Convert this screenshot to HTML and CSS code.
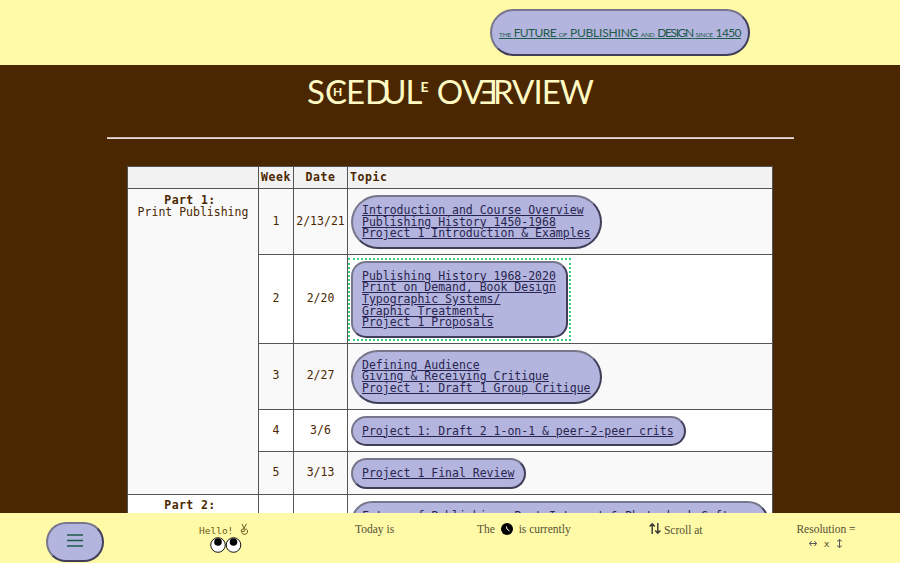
FILE: index.html
```html
<!DOCTYPE html>
<html lang="en">
<head>
    <meta charset="UTF-8">
    <meta name="viewport" content="width=device-width, initial-scale=1.0">
    <title>Schedule Overview</title>
    <link rel="stylesheet" href="styles.css">
</head>
<body>

    <header class="topBar">
        <a class="logoPill" href="#"><span class="logoText"><span class="logoSmall">THE</span> <span class="logoTight">FUTURE</span> <span class="logoSmall">OF</span> PUBLISHING <span class="logoSmall">AND</span> <span class="logoTighter">DESIGN</span> <span class="logoSmall">SINCE</span> <span class="logoYear">1450</span></span></a>
    </header>

    <main class="content">
        <h1 class="pageTitle">S<span class="ligature ligC">C<span class="ligInner">H</span></span>E<span class="joinD">D</span><span class="joinU">U</span><span class="ligature ligL">L<span class="ligUpper">E</span></span> OV<span class="flipE">E</span><span class="joinR">R</span>VIEW</h1>
        <hr class="titleRule">

        <table class="schedule">
            <tr class="headRow">
                <th class="colPart"></th>
                <th class="colWeek">Week</th>
                <th class="colDate">Date</th>
                <th class="colTopic">Topic</th>
            </tr>
            <tr class="rowA">
                <td class="partCell" rowspan="5"><b>Part 1:</b><br>Print Publishing</td>
                <td>1</td>
                <td>2/13/21</td>
                <td class="topicCell"><a class="pill" href="#">Introduction and Course Overview<br>Publishing History 1450-1968<br>Project 1 Introduction &amp; Examples</a></td>
            </tr>
            <tr class="rowB">
                <td>2</td>
                <td>2/20</td>
                <td class="topicCell"><span class="focusRing"><a class="pill pillSquare" href="#">Publishing History 1968-2020<br>Print on Demand, Book Design<br>Typographic Systems/<br>Graphic Treatment,&nbsp;<br>Project 1 Proposals</a></span></td>
            </tr>
            <tr class="rowA">
                <td>3</td>
                <td>2/27</td>
                <td class="topicCell"><a class="pill" href="#">Defining Audience<br>Giving &amp; Receiving Critique<br>Project 1: Draft 1 Group Critique</a></td>
            </tr>
            <tr class="rowB">
                <td>4</td>
                <td>3/6</td>
                <td class="topicCell"><a class="pill" href="#">Project 1: Draft 2 1-on-1 &amp; peer-2-peer crits</a></td>
            </tr>
            <tr class="rowA">
                <td>5</td>
                <td>3/13</td>
                <td class="topicCell"><a class="pill" href="#">Project 1 Final Review</a></td>
            </tr>
            <tr class="rowB">
                <td class="partCell"><b>Part 2:</b></td>
                <td>6</td>
                <td>3/20</td>
                <td class="topicCell"><a class="pill" href="#">Future of Publishing: Post-Internet &amp; Photo-book Software<br>Project 2 Introduction &amp; Examples</a></td>
            </tr>
        </table>
    </main>

    <footer class="bottomBar">
        <button class="menuBtn" aria-label="Menu">
            <svg width="16" height="13" viewBox="0 0 16 13">
                <path d="M0 1H16M0 6.5H16M0 12H16" stroke="#1f5a4a" stroke-width="1.6" fill="none"/>
            </svg>
        </button>
        <div class="hello">
            <div class="helloText">Hello!
                <svg class="helloHand" width="9" height="12" viewBox="0 0 9 12">
                    <path d="M2 1L4.5 6M6.5 0.8L3.5 6M1.5 6.5C1 8 1.5 11 4 11.3C6.5 11.5 8 10 7.5 7.5C7.3 6.3 6 6 5 6.3M1.5 6.5C3 5.8 4.5 6.3 5 7.5M2 8.5L5 8" stroke="#6a5a20" stroke-width="1" fill="none"/>
                </svg>
            </div>
            <div class="eyes">
                <svg width="32" height="17" viewBox="0 0 32 17">
                    <circle cx="8" cy="9" r="7.3" fill="#fff" stroke="#111" stroke-width="1"/>
                    <circle cx="23.5" cy="9" r="7.3" fill="#fff" stroke="#111" stroke-width="1"/>
                    <circle cx="8" cy="6" r="3.8" fill="#000"/>
                    <circle cx="23.5" cy="6" r="3.8" fill="#000"/>
                </svg>
            </div>
        </div>
        <div class="stat statToday">Today is</div>
        <div class="stat statClock">The
            <svg class="clockIcon" width="12" height="12" viewBox="0 0 12 12">
                <circle cx="6" cy="6" r="6" fill="#000"/>
                <path d="M5.5 3.5L6 6L8.5 8" stroke="#fff" stroke-width="1" fill="none"/>
            </svg>
            is currently</div>
        <div class="stat statScroll">
            <svg width="12" height="11" viewBox="0 0 12 11">
                <path d="M3.2 11V1M0.6 3.4L3.2 0.8L5.8 3.4M8.8 0V10M6.2 7.6L8.8 10.2L11.4 7.6" stroke="#333" stroke-width="1.4" fill="none"/>
            </svg>
            Scroll at</div>
        <div class="stat statRes">
            <div>Resolution =</div>
            <div class="resLine">
                <svg width="8" height="7" viewBox="0 0 8 7"><path d="M0.5 3.5H7.5M2.5 1L0.5 3.5L2.5 6M5.5 1L7.5 3.5L5.5 6" stroke="#555" fill="none"/></svg>
                <span>x</span>
                <svg width="7" height="9" viewBox="0 0 7 9"><path d="M3.5 0.5V8.5M1 2.5L3.5 0.5L6 2.5M1 6.5L3.5 8.5L6 6.5" stroke="#555" fill="none"/></svg>
            </div>
        </div>
    </footer>

</body>
</html>
```

FILE: styles.css
```css
html, body {
    margin: 0;
    height: 100%;
    overflow: hidden;
}

body {
    background-color: #4a2700;
    color: #4a2700;
    font-family: "DejaVu Sans Mono", "Liberation Mono", monospace;
}

/* top bar */
.topBar {
    height: 65px;
    background-color: #fffaa8;
    display: flex;
    justify-content: flex-end;
    padding: 9px 150px 0 0;
    box-sizing: border-box;
}

.logoPill {
    width: 260px;
    height: 47px;
    box-sizing: border-box;
    background-color: #b3b5de;
    border: 2px solid;
    border-color: #77768c #3f3d58 #3f3d58 #77768c;
    border-radius: 24px;
    display: flex;
    align-items: center;
    justify-content: center;
    color: #1f5a4a;
    font-family: "Lato", sans-serif;
    font-size: 12px;
    text-decoration: none;
}

.logoText {
    text-decoration: underline;
    white-space: nowrap;
    word-spacing: -0.2px;
    letter-spacing: -0.2px;
}

.logoSmall {
    font-size: 6.5px;
}

.logoTight {
    letter-spacing: -0.6px;
}

.logoTighter {
    letter-spacing: -1.4px;
}

.logoYear {
    letter-spacing: -0.6px;
}

/* title */
.content {
    padding-top: 6px;
}

.pageTitle {
    margin: 0;
    text-align: center;
    color: #fff9c4;
    font-family: "Lato", sans-serif;
    font-weight: 400;
    font-size: 33px;
    line-height: 40px;
    letter-spacing: -1px;
}

.ligature {
    position: relative;
    display: inline-block;
}

.ligC {
    margin-left: 1px;
}

.ligInner {
    position: absolute;
    left: 8px;
    top: 14px;
    font-size: 12px;
    line-height: 14px;
    font-weight: 700;
}

.ligUpper {
    position: absolute;
    left: 15px;
    top: 9px;
    font-size: 14px;
    line-height: 14px;
    font-weight: 700;
}

.ligL {
    margin-right: 8px;
}

.joinD {
    margin-left: 1px;
}

.joinU {
    margin-left: -7px;
}

.flipE {
    display: inline-block;
    transform: scaleX(-1);
    margin-left: -3px;
}

.joinR {
    margin-left: -5px;
}

.titleRule {
    width: 687px;
    margin: 26px auto 27px;
    border: 0;
    border-top: 1px solid #cbb6ae;
    border-bottom: 1px solid #e8e0dc;
}

/* table */
.schedule {
    margin: 0 auto;
    width: 646px;
    border-collapse: collapse;
    table-layout: fixed;
    font-size: 11.5px;
    line-height: 11.6px;
}

.schedule th,
.schedule td {
    border: 1px solid #555;
    text-align: center;
    padding: 0;
}

.schedule th {
    height: 21px;
    background-color: #f2f2f2;
    letter-spacing: 0.6px;
}

.colPart { width: 130px; }
.colWeek { width: 34px; }
.colDate { width: 53px; }

.schedule .colTopic {
    text-align: left;
    padding-left: 2px;
}

.schedule b {
    letter-spacing: 0.4px;
    margin-right: 6px;
}

.rowA td { background-color: #f9f9f9; }
.rowB td { background-color: #fff; }

.schedule .partCell {
    vertical-align: top;
    background-color: #f9f9f9;
    padding-top: 5px;
    line-height: 12px;
}

.schedule .rowB .partCell {
    background-color: #fff;
    padding-top: 4px;
}

.schedule .topicCell {
    text-align: left;
    padding: 6px 4px 5px 3px;
}

.pill {
    display: inline-block;
    background-color: #b3b5de;
    border: 2px solid;
    border-color: #77768c #3f3d58 #3f3d58 #77768c;
    border-radius: 27px;
    padding: 8px 10px 7px 9px;
    color: #2a2550;
    white-space: nowrap;
}

.pillSquare {
    border-radius: 15px;
}

.focusRing {
    display: inline-block;
    margin: -3px;
    padding: 1px;
    border: 2px dotted #3ad07a;
    line-height: 0;
}

.focusRing .pill {
    line-height: 11.6px;
}

/* bottom bar, stays over the table */
.bottomBar {
    position: fixed;
    left: 0;
    right: 0;
    bottom: 0;
    height: 50px;
    background-color: #fffaa8;
    display: grid;
    grid-template-columns: 46px 58px 95px 156px 122px 172px 147px 60px 1fr;
    grid-template-areas: ". menu . hello today clock scroll res .";
    font-family: "Liberation Serif", serif;
    font-size: 11.5px;
    color: #555033;
}

.menuBtn {
    grid-area: menu;
    width: 58px;
    height: 40px;
    margin-top: 9px;
    background-color: #b3b5de;
    border: 2px solid;
    border-color: #77768c #3f3d58 #3f3d58 #77768c;
    border-radius: 20px;
    padding: 0;
}

.hello {
    grid-area: hello;
    padding-top: 10px;
    font-family: "DejaVu Sans Mono", monospace;
    font-size: 9.5px;
    color: #6a5a20;
}

.helloHand {
    vertical-align: -1px;
    margin-left: 1px;
}

.eyes {
    padding-left: 11px;
    line-height: 0;
}

.stat {
    padding-top: 10px;
}

.statToday { grid-area: today; }
.statClock { grid-area: clock; white-space: nowrap; }
.statScroll { grid-area: scroll; white-space: nowrap; }
.statRes { grid-area: res; white-space: nowrap; text-align: center; }

.clockIcon {
    vertical-align: -2px;
    margin: 0 3px;
}

.resLine {
    display: flex;
    justify-content: center;
    align-items: center;
    gap: 7px;
    margin-top: 3px;
    font-family: "DejaVu Sans Mono", monospace;
    font-size: 9.5px;
}
```
